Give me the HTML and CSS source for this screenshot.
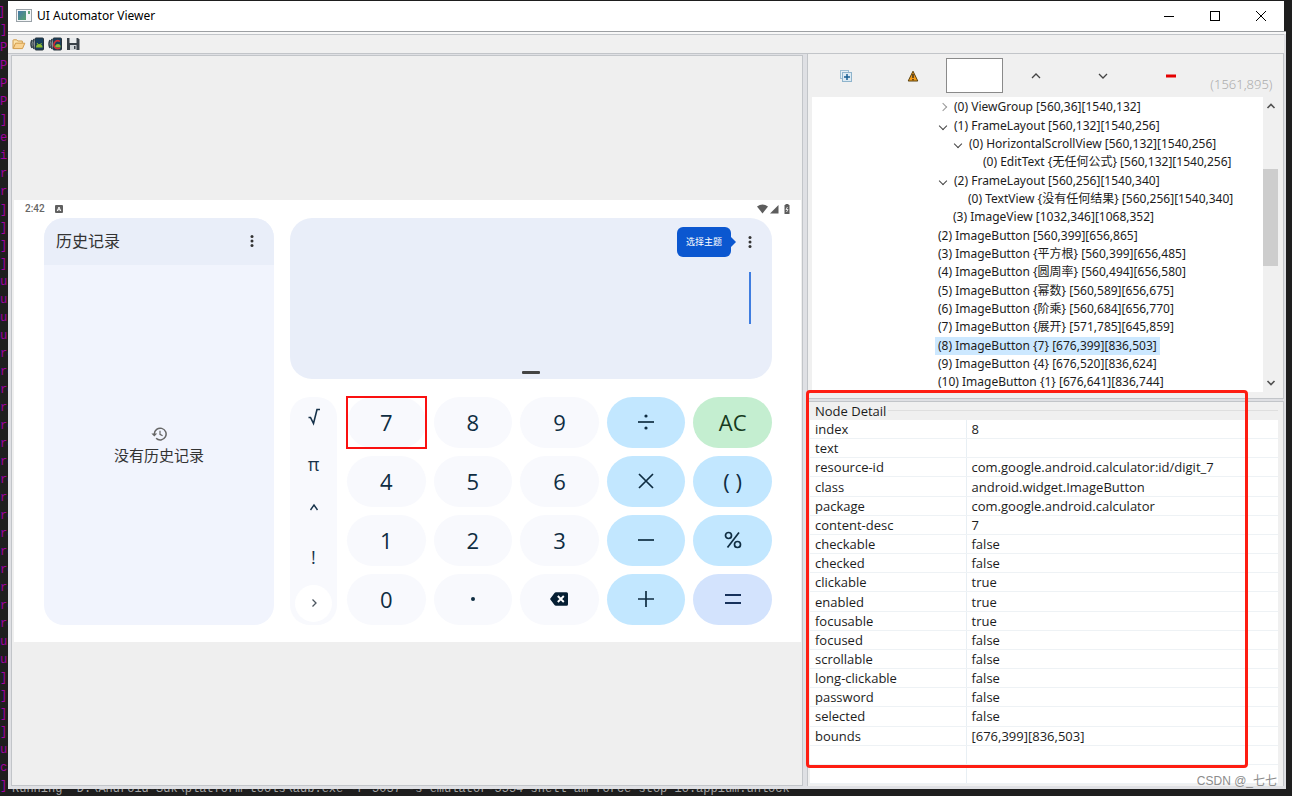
FILE: index.html
```html
<!DOCTYPE html>
<html lang="zh-CN">
<head>
<meta charset="utf-8">
<title>UI Automator Viewer</title>
<link rel="stylesheet" href="styles.css">
</head>
<body>
<div class="desktop">
  <pre class="console-side">]
]
P]
P]
P]
P]
]
el
iu
re
re
]
]
]
]
ut
ut
ut
ut
re
re
re
re
re
re
re
re
re
re
re
re
re
re
re
re
ut
ut
]
]
]
]
ut
ca
]</pre>
  <main class="window">
    <header class="titlebar">
      <svg class="app-icon" viewBox="0 0 16 14"><defs><linearGradient id="appFill" x1="0" y1="0" x2="1" y2="1"><stop offset="0" stop-color="#4478a8"/><stop offset="1" stop-color="#56a36c"/></linearGradient></defs><rect x=".5" y=".5" width="15" height="12" fill="#f4f6f8" stroke="#9aa2a8"/><rect x="2" y="2" width="8" height="9" fill="url(#appFill)"/><rect x="12" y="2" width="2" height="3" fill="#62a77a"/></svg>
      <h1 class="title">UI Automator Viewer</h1>
      <div class="window-controls">
        <button class="icon-button" aria-label="Minimize"><svg viewBox="0 0 12 12"><path d="M1 6.500h10" stroke="#000"/></svg></button>
        <button class="icon-button" aria-label="Maximize"><svg viewBox="0 0 12 12"><rect x="1.500" y="1.500" width="9" height="9" fill="none" stroke="#000"/></svg></button>
        <button class="icon-button" aria-label="Close"><svg viewBox="0 0 12 12"><path d="M1 1l10 10M11 1L1 11" stroke="#000"/></svg></button>
      </div>
    </header>
    <div class="shell">
      <nav class="toolbar">
        <button class="icon-button" aria-label="Open"><svg viewBox="0 0 14 14"><path d="M1 11.500V3.500q0-.7.700-.700h3l1 1.200h4.600v2" fill="#fbe3ac" stroke="#cf9a4a"/><path d="M1.200 11.600L3.600 6.200h9.200l-2.300 5.400z" fill="#fad391" stroke="#d29b49"/></svg></button>
        <button class="icon-button" aria-label="Device screenshot"><svg viewBox="0 0 14 14"><path d="M2 3Q0 7 2 11M4 2Q2 7 4 12" fill="none" stroke="#36434c" stroke-width="1.600"/><rect x="5" y="1" width="8.500" height="12" rx="1" fill="#173f5c" stroke="#26323b"/><path d="M6 10.500q0-3.500 3.300-3.500t3.300 3.500z" fill="#8dbb32"/><path d="M7 6l1 1.500M11.500 6l-1 1.500" stroke="#8dbb32"/></svg></button>
        <button class="icon-button" aria-label="Device screenshot, compressed"><svg viewBox="0 0 14 14"><path d="M2 3Q0 7 2 11M4 2Q2 7 4 12" fill="none" stroke="#36434c" stroke-width="1.600"/><rect x="5" y="1" width="8.500" height="12" rx="1" fill="#173f5c" stroke="#26323b"/><path d="M7 10.500q0-3.500 3-3.500t2.600 3.500z" fill="#8dbb32"/><path d="M12 4.500Q9 2.500 7 5t-.5 5 5.500 1.300" fill="none" stroke="#d32d35" stroke-width="1.500"/></svg></button>
        <button class="icon-button" aria-label="Save"><svg viewBox="0 0 14 14"><path d="M1 1h11l1.500 1.500V13H1z" fill="#384048"/><rect x="3.500" y="1" width="7" height="5" fill="#e9ecee"/><rect x="4" y="8" width="6.500" height="5" fill="#cfd4d8"/><rect x="8" y="9" width="1.500" height="3" fill="#384048"/></svg></button>
      </nav>
      <div class="panes">
        <section class="preview" aria-label="Device screenshot">
          <div class="phone">
            <div class="statusbar">
              <span>2:42</span>
              <svg class="status-badge" viewBox="0 0 8 8"><rect width="8" height="8" rx="1" fill="#606060"/><path d="M2.200 6L4 2l1.800 4M3 4.800h2" fill="none" stroke="#fff"/></svg>
              <svg class="status-icons" viewBox="0 0 34 12"><path d="M0 3.500Q5.500-.5 11 3.500L5.500 10.500z" fill="#5d5d5d"/><path d="M13 10.500L21.500 2v8.500z" fill="#5d5d5d"/><path d="M27.500 2h1V1h3v1h1v9h-5z" fill="#5d5d5d"/><path d="M30.500 4l-1.500 2.500h2L29.500 9" fill="none" stroke="#fff" stroke-width=".8"/></svg>
            </div>
            <div class="calculator">
              <aside class="history">
                <div class="history-head"><h2>历史记录</h2>
                  <button class="icon-button more" aria-label="更多选项"><svg viewBox="0 0 4 14"><circle cx="2" cy="2.500" r="1.500"/><circle cx="2" cy="7" r="1.500"/><circle cx="2" cy="11.500" r="1.500"/></svg></button>
                </div>
                <div class="history-empty">
                  <svg viewBox="0 0 16 16"><path d="M3.300 8a5.900 5.900 0 1 1 1.800 4.300" fill="none" stroke="#666" stroke-width="1.500"/><path d="M.4 7.500h5.800L3.300 10.400z" fill="#666"/><path d="M9 4.800V8.300l2.600 1.500" fill="none" stroke="#666" stroke-width="1.200"/></svg>
                  <p>没有历史记录</p>
                </div>
              </aside>
              <div class="calc-main">
                <div class="display">
                  <div class="display-head">
                    <span class="theme-tip">选择主题</span>
                    <button class="icon-button more" aria-label="更多选项"><svg viewBox="0 0 4 14"><circle cx="2" cy="2.500" r="1.500"/><circle cx="2" cy="7" r="1.500"/><circle cx="2" cy="11.500" r="1.500"/></svg></button>
                  </div>
                  <div class="cursor"></div>
                  <div class="handle"></div>
                </div>
                <div class="pad">
                  <div class="science">
                    <button aria-label="平方根"><svg viewBox="0 0 18 20"><path d="M3.500 9.500h2l3 6L12 1.500h3" fill="none" stroke="#16324a" stroke-width="1.600"/></svg></button>
                    <button>π</button>
                    <button aria-label="幂数"><svg viewBox="0 0 18 20"><path d="M5.500 9L9 4l3.500 5" fill="none" stroke="#16324a" stroke-width="1.400"/></svg></button>
                    <button>!</button>
                    <button class="expand" aria-label="展开"><svg viewBox="0 0 18 20"><path d="M7.500 6.500L11 10l-3.500 3.500" fill="none" stroke="#4c5660" stroke-width="1.300"/></svg></button>
                  </div>
                  <div class="keys">
                    <div class="cell picked"><button class="key">7</button></div>
                    <div class="cell"><button class="key">8</button></div>
                    <div class="cell"><button class="key">9</button></div>
                    <div class="cell"><button class="key op" aria-label="除"><svg viewBox="0 0 24 24"><path d="M4 12h16" stroke="currentColor" stroke-width="1.700"/><circle cx="12" cy="6" r="1.600" fill="currentColor"/><circle cx="12" cy="18" r="1.600" fill="currentColor"/></svg></button></div>
                    <div class="cell"><button class="key clear">AC</button></div>
                    <div class="cell"><button class="key">4</button></div>
                    <div class="cell"><button class="key">5</button></div>
                    <div class="cell"><button class="key">6</button></div>
                    <div class="cell"><button class="key op" aria-label="乘"><svg viewBox="0 0 24 24"><path d="M5 5l14 14M19 5L5 19" stroke="currentColor" stroke-width="1.700"/></svg></button></div>
                    <div class="cell"><button class="key op">( )</button></div>
                    <div class="cell"><button class="key">1</button></div>
                    <div class="cell"><button class="key">2</button></div>
                    <div class="cell"><button class="key">3</button></div>
                    <div class="cell"><button class="key op" aria-label="减"><svg viewBox="0 0 24 24"><path d="M4 12h16" stroke="currentColor" stroke-width="1.700"/></svg></button></div>
                    <div class="cell"><button class="key op" aria-label="百分比"><svg viewBox="0 0 24 24"><g fill="none" stroke="currentColor" stroke-width="1.700"><circle cx="7.500" cy="7.500" r="3"/><circle cx="16.500" cy="16.500" r="3"/><path d="M18 4.500L6.500 19.500"/></g></svg></button></div>
                    <div class="cell"><button class="key">0</button></div>
                    <div class="cell"><button class="key" aria-label="点"><svg viewBox="0 0 24 24"><circle cx="12" cy="12" r="2" fill="currentColor"/></svg></button></div>
                    <div class="cell"><button class="key" aria-label="删除"><svg viewBox="0 0 24 24"><path d="M3 12l4.500-6q.5-.700 1.500-.700h10.500q1.500 0 1.500 1.500v10.400q0 1.500-1.500 1.500H9q-1 0-1.500-.700z" fill="#061f33"/><path d="M10.800 9l6 6M16.800 9l-6 6" stroke="#fff" stroke-width="1.900"/></svg></button></div>
                    <div class="cell"><button class="key op" aria-label="加"><svg viewBox="0 0 24 24"><path d="M4 12h16M12 4v16" stroke="currentColor" stroke-width="1.700"/></svg></button></div>
                    <div class="cell"><button class="key equals" aria-label="等于"><svg viewBox="0 0 24 24"><path d="M4 8h16M4 16h16" stroke="currentColor" stroke-width="1.900"/></svg></button></div>
                  </div>
                </div>
              </div>
            </div>
          </div>
        </section>
        <div class="inspector">
          <section class="hierarchy" aria-label="Node tree">
            <div class="tree-tools">
              <button class="icon-button" aria-label="Expand all"><svg viewBox="0 0 12 12"><rect x=".5" y=".5" width="8" height="8" fill="#e6eff5" stroke="#9dbed2"/><rect x="2.500" y="2.500" width="9" height="9" fill="#dceaf3" stroke="#8fb4cc"/><path d="M7 4v6M4 7h6" stroke="#185f93" stroke-width="1.500"/></svg></button>
              <button class="icon-button" aria-label="Toggle NAF nodes"><svg viewBox="0 0 12 12"><path d="M6 1.200L10.800 11H1.200z" fill="#f49b17" stroke="#5b430f"/><path d="M6 4v4M6 9v1.200" stroke="#222" stroke-width="1.300"/></svg></button>
              <input class="search" type="text" aria-label="Search">
              <button class="icon-button" aria-label="Previous"><svg viewBox="0 0 12 12"><path d="M2 8l4-4 4 4" fill="none" stroke="#444" stroke-width="1.300"/></svg></button>
              <button class="icon-button" aria-label="Next"><svg viewBox="0 0 12 12"><path d="M2 4l4 4 4-4" fill="none" stroke="#444" stroke-width="1.300"/></svg></button>
              <button class="icon-button" aria-label="Clear search"><svg viewBox="0 0 12 12"><path d="M1 6h10" stroke="#e50000" stroke-width="3"/></svg></button>
              <span class="coords">(1561,895)</span>
            </div>
            <div class="tree-box">
              <ul class="tree" role="tree">
                <li class="level-1 closed" role="treeitem"><span>(0) ViewGroup [560,36][1540,132]</span></li>
                <li class="level-1 open" role="treeitem"><span>(1) FrameLayout [560,132][1540,256]</span></li>
                <li class="level-2 open" role="treeitem"><span>(0) HorizontalScrollView [560,132][1540,256]</span></li>
                <li class="level-3" role="treeitem"><span>(0) EditText {无任何公式} [560,132][1540,256]</span></li>
                <li class="level-1 open" role="treeitem"><span>(2) FrameLayout [560,256][1540,340]</span></li>
                <li class="level-2" role="treeitem"><span>(0) TextView {没有任何结果} [560,256][1540,340]</span></li>
                <li class="level-1" role="treeitem"><span>(3) ImageView [1032,346][1068,352]</span></li>
                <li role="treeitem"><span>(2) ImageButton [560,399][656,865]</span></li>
                <li role="treeitem"><span>(3) ImageButton {平方根} [560,399][656,485]</span></li>
                <li role="treeitem"><span>(4) ImageButton {圆周率} [560,494][656,580]</span></li>
                <li role="treeitem"><span>(5) ImageButton {幂数} [560,589][656,675]</span></li>
                <li role="treeitem"><span>(6) ImageButton {阶乘} [560,684][656,770]</span></li>
                <li role="treeitem"><span>(7) ImageButton {展开} [571,785][645,859]</span></li>
                <li class="selected" role="treeitem" aria-selected="true"><span>(8) ImageButton {7} [676,399][836,503]</span></li>
                <li role="treeitem"><span>(9) ImageButton {4} [676,520][836,624]</span></li>
                <li role="treeitem"><span>(10) ImageButton {1} [676,641][836,744]</span></li>
              </ul>
              <div class="scrollbar">
                <button class="icon-button" aria-label="Scroll up"><svg viewBox="0 0 12 12"><path d="M2.500 8L6 4.500 9.500 8" fill="none" stroke="#505050" stroke-width="1.600"/></svg></button>
                <div class="thumb"></div>
                <button class="icon-button scroll-down" aria-label="Scroll down"><svg viewBox="0 0 12 12"><path d="M2.500 4L6 7.500 9.500 4" fill="none" stroke="#505050" stroke-width="1.600"/></svg></button>
              </div>
            </div>
          </section>
          <section class="detail">
            <h2 class="detail-title">Node Detail</h2>
            <table class="properties">
              <tbody>
                <tr><th scope="row">index</th><td>8</td></tr>
                <tr><th scope="row">text</th><td></td></tr>
                <tr><th scope="row">resource-id</th><td>com.google.android.calculator:id/digit_7</td></tr>
                <tr><th scope="row">class</th><td>android.widget.ImageButton</td></tr>
                <tr><th scope="row">package</th><td>com.google.android.calculator</td></tr>
                <tr><th scope="row">content-desc</th><td>7</td></tr>
                <tr><th scope="row">checkable</th><td>false</td></tr>
                <tr><th scope="row">checked</th><td>false</td></tr>
                <tr><th scope="row">clickable</th><td>true</td></tr>
                <tr><th scope="row">enabled</th><td>true</td></tr>
                <tr><th scope="row">focusable</th><td>true</td></tr>
                <tr><th scope="row">focused</th><td>false</td></tr>
                <tr><th scope="row">scrollable</th><td>false</td></tr>
                <tr><th scope="row">long-clickable</th><td>false</td></tr>
                <tr><th scope="row">password</th><td>false</td></tr>
                <tr><th scope="row">selected</th><td>false</td></tr>
                <tr><th scope="row">bounds</th><td>[676,399][836,503]</td></tr>
                <tr><td></td><td></td></tr>
                <tr><td></td><td></td></tr>
              </tbody>
            </table>
            <div class="callout"></div>
          </section>
        </div>
      </div>
    </div>
  </main>
  <pre class="console-foot">Running 'D:\Android-Sdk\platform-tools\adb.exe -P 5037 -s emulator-5554 shell am force-stop io.appium.unlock'</pre>
  <div class="watermark">CSDN @_七七</div>
</div>
</body>
</html>
```
FILE: styles.css
```css
* { box-sizing: border-box; }

body {
  margin: 0;
  color: #1c1c1c;
  background: #1e1e1e;
  font: 12px/18px "Noto Sans", "Noto Sans CJK SC", sans-serif;
}

h1, h2, p, ul, pre { margin: 0; padding: 0; font-size: inherit; font-weight: normal; }
button, input { margin: 0; padding: 0; border: 0; background: none; color: inherit; font: inherit; }
svg { display: block; }

.icon-button { display: flex; align-items: center; justify-content: center; }
.icon-button svg { width: 12px; height: 12px; }

/* Desktop and console behind the window */
.desktop {
  position: relative;
  display: grid;
  grid-template-columns: 8px minmax(0, 1fr) 6px;
  grid-template-rows: minmax(0, 1fr) 7px;
  height: 100vh;
  padding-top: 1px;
  overflow: hidden;
}
.console-side, .console-foot { overflow: hidden; font: 12px/18px "Liberation Mono", monospace; }
.console-side { grid-row: 1 / 3; padding-top: 2px; color: #a000a0; text-indent: -2px; }
.console-foot {
  display: flex;
  align-items: flex-end;
  grid-column: 2;
  padding-left: 4px;
  color: #a5a5a5;
  line-height: 14px;
}
.window { display: flex; flex-direction: column; grid-column: 2; min-height: 0; }

.titlebar {
  display: flex;
  align-items: center;
  flex: none;
  height: 30px;
  margin-right: 2px;
  padding-left: 8px;
  background: #fff;
  color: #000;
}
.app-icon { width: 16px; height: 14px; }
.title { margin-left: 5px; }
.window-controls { display: flex; margin-left: auto; }
.window-controls .icon-button { width: 46px; height: 30px; }

.shell {
  display: flex;
  flex: 1;
  flex-direction: column;
  min-height: 0;
  padding: 2px 2px 3px 0;
  border-top: 1px solid #9da0a3;
  background: linear-gradient(#f8f8f8 2px, #dfe0e4 2px);
}
.toolbar {
  display: flex;
  align-items: center;
  flex: none;
  gap: 4px;
  height: 20px;
  padding-left: 4px;
  border: solid #c2c5c9;
  border-width: 1px 0;
  background: #f0f0f0;
}
.toolbar .icon-button svg { width: 14px; height: 14px; }
.panes {
  display: grid;
  flex: 1;
  grid-template-columns: minmax(0, 792fr) minmax(0, 477fr);
  gap: 4px;
  min-height: 0;
  padding-left: 3px;
}

/* Device preview */
.preview {
  display: flex;
  flex-direction: column;
  justify-content: center;
  margin-top: 1px;
  padding: 0 1px 0 2px;
  border: 1px solid #c2c5c9;
  background: #efefef;
}
.phone { padding: 0 29px 17px 30px; background: #fff; color: #333; }
.statusbar {
  display: flex;
  align-items: center;
  height: 18px;
  margin: 0 -19px;
  color: #666;
  font: 500 10px/18px Roboto, sans-serif;
}
.status-badge { width: 8px; height: 8px; margin-left: 10px; }
.status-icons { width: 34px; height: 12px; margin-left: auto; }
.calculator { display: grid; grid-template-columns: minmax(0, 230fr) minmax(0, 482fr); gap: 16px; }
.history { display: flex; flex-direction: column; overflow: hidden; border-radius: 20px; background: #f1f4fd; }
.history-head {
  display: flex;
  align-items: center;
  justify-content: space-between;
  height: 47px;
  padding: 0 20px 0 12px;
  background: #e9eef9;
  font-size: 16px;
}
.icon-button.more svg { width: 4px; height: 14px; fill: #333; }
.history-empty {
  display: flex;
  flex: 1;
  flex-direction: column;
  align-items: center;
  justify-content: center;
  gap: 4px;
  font-size: 15px;
}
.history-empty svg { width: 16px; height: 16px; }

.calc-main { display: flex; flex-direction: column; gap: 18px; }
.display {
  display: flex;
  flex-direction: column;
  height: 161px;
  padding: 9px 20px 5px;
  border-radius: 22px;
  background: #e9eef9;
}
.display-head { display: flex; align-items: center; justify-content: flex-end; gap: 17px; }
.theme-tip {
  position: relative;
  padding: 6px 9px;
  border-radius: 6px;
  background: #0b57d0;
  color: #fff;
  font-size: 9px;
}
.theme-tip::after {
  content: "";
  position: absolute;
  top: 10px;
  left: 100%;
  border: 5px solid transparent;
  border-left-color: #0b57d0;
}
.cursor { align-self: flex-end; width: 2px; height: 52px; margin: 15px 1px 0 0; background: #3f7de0; }
.handle { align-self: center; width: 18px; height: 3px; margin-top: auto; border-radius: 1px; background: #444; }

.pad { display: grid; grid-template-columns: 47px minmax(0, 1fr); gap: 10px; }
.science {
  display: flex;
  flex-direction: column;
  align-items: center;
  justify-content: space-between;
  padding: 3px 5px;
  border-radius: 20px;
  background: #f8f9fd;
  color: #16324a;
  font: 18px/24px "Open Sans", sans-serif;
}
.science button { display: flex; align-items: center; justify-content: center; width: 37px; height: 37px; }
.science svg { width: 18px; height: 20px; }
.science .expand { border-radius: 50%; background: #fff; }
.keys { display: grid; grid-template-columns: repeat(5, minmax(0, 1fr)); gap: 8px; }
.cell { display: grid; height: 51px; }
.picked { outline: 2px solid #fa1010; outline-offset: -1px; }
.key {
  display: flex;
  align-items: center;
  justify-content: center;
  border-radius: 26px;
  background: #f8f9fd;
  color: #0f2d42;
  font: 500 22px/30px "Open Sans", sans-serif;
}
.key svg { width: 24px; height: 24px; }
.op { background: #c2e7ff; }
.clear { background: #c4eed0; color: #173a20; }
.equals { background: #d3e3fd; color: #17325c; }

/* Node hierarchy */
.inspector {
  display: grid;
  grid-template-rows: minmax(0, 345fr) minmax(0, 386fr);
  gap: 2px;
  min-height: 0;
}
.hierarchy {
  display: flex;
  flex-direction: column;
  min-height: 0;
  padding: 0 5px 6px 4px;
  border: solid #c2c5c9;
  border-width: 0 1px 1px;
  background: #f0f0f0;
}
.tree-tools {
  display: grid;
  flex: none;
  grid-template-columns: 68fr 66fr 57fr 66fr 67fr 68fr 73fr;
  align-items: center;
  height: 43px;
}
.search { width: 100%; height: 35px; border: 1px solid #8a8a8a; background: #fff; }
.coords { padding-top: 16px; text-align: center; color: #adadad; font-size: 13px; font-weight: 300; }
.tree-box { display: grid; flex: 1; grid-template-columns: minmax(0, 1fr) 15px; min-height: 0; }
.tree {
  display: grid;
  grid-auto-rows: minmax(0, 1fr);
  padding: 1px 0 0 108px;
  overflow: hidden;
  background: #fff;
  list-style: none;
  white-space: nowrap;
}
.tree li { display: flex; align-items: center; }
.tree li::before { content: ""; flex: none; width: 15px; height: 12px; }
.tree li.open::before, .tree li.closed::before {
  width: 5px;
  height: 5px;
  margin: 0 5px;
  border: solid #444;
  border-width: 0 1px 1px 0;
  rotate: 45deg;
}
.tree li.closed::before { border-color: #999; rotate: -45deg; }
.tree span { padding: 0 3px; }
.tree .selected span { background: #cce8ff; }
.level-1 { padding-left: 15px; }
.level-2 { padding-left: 30px; }
.level-3 { padding-left: 45px; }
.scrollbar { display: grid; grid-template-rows: 17px 55fr 98fr 109fr 17px; }
.thumb { grid-row: 3; background: #cdcdcd; }
.scroll-down { grid-row: 5; }

/* Node detail */
.detail {
  position: relative;
  display: flex;
  flex-direction: column;
  min-height: 0;
  padding: 0 5px 2px 2px;
  border: solid #c2c5c9;
  border-width: 1px 1px 0;
  background: #f0f0f0;
  font-family: "Open Sans", sans-serif;
  font-size: 13px;
}
.detail-title { display: flex; align-items: center; flex: none; gap: 2px; padding-left: 5px; }
.detail-title::after { content: ""; flex: 1; border-top: 1px solid #dfdfdf; }
.properties {
  flex: 1;
  width: 100%;
  border-collapse: collapse;
  table-layout: fixed;
  background: #fff;
  line-height: 18px;
}
.properties th, .properties td {
  height: 19px;
  padding: 0 5px;
  border-bottom: 1px solid #eef2f5;
  font-weight: normal;
  text-align: left;
}
.properties tr > :first-child { width: 156px; border-right: 1px solid #e8eff4; }
.callout {
  position: absolute;
  top: -12px;
  left: -2px;
  right: 35px;
  bottom: 18px;
  border: 3px solid #fe1d12;
  border-radius: 4px;
  pointer-events: none;
}
.watermark {
  position: absolute;
  right: 15px;
  bottom: 6px;
  color: #8c8c8c;
  font: 12px/18px "Liberation Sans", "Noto Sans CJK SC", sans-serif;
}
```
